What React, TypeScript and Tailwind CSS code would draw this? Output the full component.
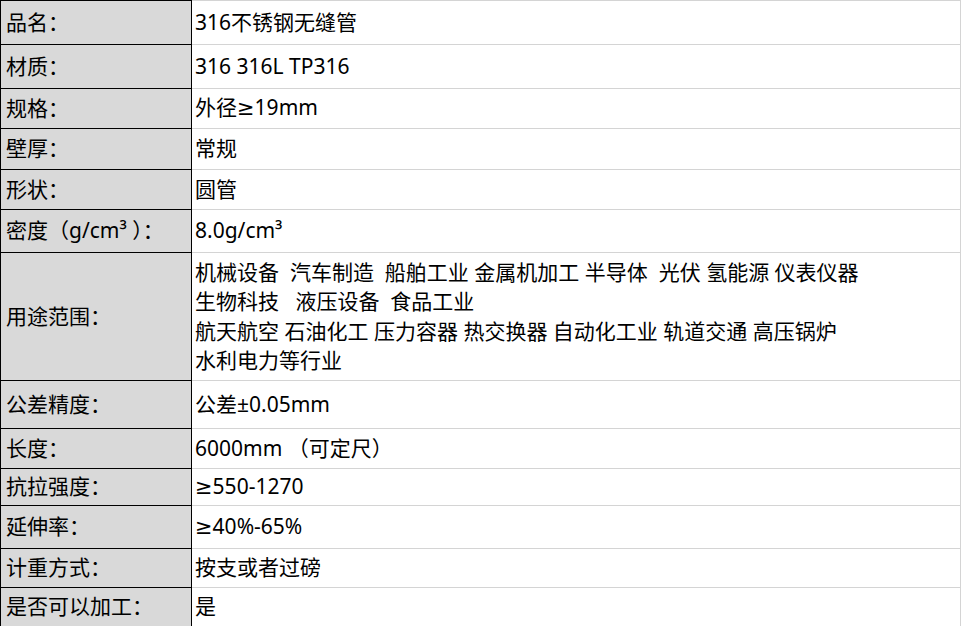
const rows: { label: string; value: string[]; h: string }[] = [
  { label: '品名：', value: ['316不锈钢无缝管'], h: 'h-[44px]' },
  { label: '材质：', value: ['316 316L TP316'], h: 'h-[44px]' },
  { label: '规格：', value: ['外径≥19mm'], h: 'h-[40px]' },
  { label: '壁厚：', value: ['常规'], h: 'h-[41px]' },
  { label: '形状：', value: ['圆管'], h: 'h-[40px]' },
  { label: '密度（g/cm³ ）：', value: ['8.0g/cm³'], h: 'h-[43px]' },
  {
    label: '用途范围：',
    value: [
      '机械设备  汽车制造  船舶工业 金属机加工 半导体  光伏 氢能源 仪表仪器',
      '生物科技   液压设备  食品工业',
      '航天航空 石油化工 压力容器 热交换器 自动化工业 轨道交通 高压锅炉',
      '水利电力等行业',
    ],
    h: 'h-[128px]',
  },
  { label: '公差精度：', value: ['公差±0.05mm'], h: 'h-[48px]' },
  { label: '长度：', value: ['6000mm （可定尺）'], h: 'h-[40px]' },
  { label: '抗拉强度：', value: ['≥550-1270'], h: 'h-[37px]' },
  { label: '延伸率：', value: ['≥40%-65%'], h: 'h-[43px]' },
  { label: '计重方式：', value: ['按支或者过磅'], h: 'h-[39px]' },
  { label: '是否可以加工：', value: ['是'], h: 'h-[39px]' },
];

// the CJK font draws ≥ slanted; the reference shows a plain one
function Text({ s }: { s: string }) {
  const parts = s.split('≥');
  return (
    <>
      {parts.map((p, i) => (
        <span key={i}>
          {i > 0 && <span className="font-['DejaVu_Sans',sans-serif]">≥</span>}
          {p}
        </span>
      ))}
    </>
  );
}

export default function App() {
  return (
    <div className="w-[962px] h-[626px] overflow-hidden bg-white text-black text-[21px] font-['Noto_Sans','Noto_Sans_CJK_SC',sans-serif]">
      {rows.map((r) => (
        <div key={r.label} className={`flex ${r.h}`}>
          <div className="w-[192px] shrink-0 flex items-center pl-[5px] bg-[#d9d9d9] border-t border-l border-r border-black whitespace-pre">
            {r.label}
          </div>
          <div className="w-[769px] shrink-0 flex flex-col justify-center pl-[3px] border-t border-r border-[#d4d4d4]">
            {r.value.map((v) => (
              <div key={v} className={`whitespace-pre ${r.value.length > 1 ? 'leading-[29.5px]' : 'leading-normal'}`}>
                <Text s={v} />
              </div>
            ))}
          </div>
        </div>
      ))}
    </div>
  );
}
